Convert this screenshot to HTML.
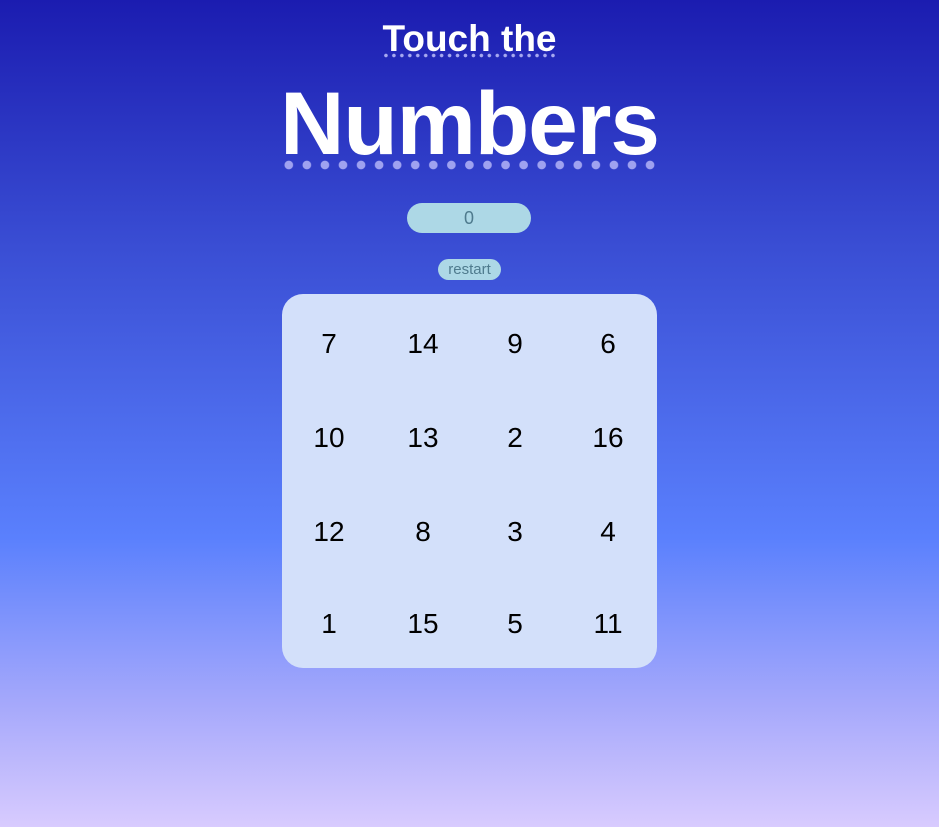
<!DOCTYPE html>
<html><head><style>
html,body{margin:0;padding:0}
body{width:939px;height:827px;overflow:hidden;background:linear-gradient(to bottom,#1b1cb0 0%,#3a4ed4 30%,#5a80fd 65%,#a5a8fb 85%,#d8cbfe 100%);font-family:"Liberation Sans",sans-serif;position:relative}
.t1{position:absolute;left:0;width:939px;top:20px;text-align:center;color:#fff;font-weight:bold;font-size:37px;line-height:38px}
.t1 span{display:inline-block;padding-bottom:0;background:radial-gradient(circle,#a6a8f0 1.6px,transparent 2px) left bottom/7.9px 5px;background-repeat:space no-repeat}
.t2{position:absolute;left:0;width:939px;top:78px;text-align:center;color:#fff;font-weight:bold;font-size:89px;line-height:90px}
.t2 span{display:inline-block;padding-bottom:2px;letter-spacing:-1px;background:radial-gradient(circle,#9fa2f0 4px,transparent 4.6px) left bottom/17.6px 10px;background-repeat:space no-repeat}
.cnt{position:absolute;left:407px;top:203px;width:124px;height:30px;border-radius:15px;background:#add8e6;color:#4f7b8e;text-align:center;font-size:18px;line-height:30px}
.rs{position:absolute;left:438px;top:259px;width:63px;height:21px;border-radius:11px;background:#add8e6;color:#4f7b8e;text-align:center;font-size:15px;line-height:21px}
.g{position:absolute;left:282px;top:294px;width:375px;height:374px;border-radius:21px;background:#d3e0fa}
.c{position:absolute;width:80px;height:40px;margin-left:-40px;margin-top:-20px;text-align:center;font-size:28px;line-height:40px;color:#000}
</style></head><body>
<div class="t1"><span>Touch the</span></div>
<div class="t2"><span>Numbers</span></div>
<div class="cnt">0</div>
<div class="rs">restart</div>
<div class="g">
<div class="c" style="left:47px;top:50px">7</div><div class="c" style="left:141px;top:50px">14</div><div class="c" style="left:233px;top:50px">9</div><div class="c" style="left:326px;top:50px">6</div>
<div class="c" style="left:47px;top:144px">10</div><div class="c" style="left:141px;top:144px">13</div><div class="c" style="left:233px;top:144px">2</div><div class="c" style="left:326px;top:144px">16</div>
<div class="c" style="left:47px;top:238px">12</div><div class="c" style="left:141px;top:238px">8</div><div class="c" style="left:233px;top:238px">3</div><div class="c" style="left:326px;top:238px">4</div>
<div class="c" style="left:47px;top:330px">1</div><div class="c" style="left:141px;top:330px">15</div><div class="c" style="left:233px;top:330px">5</div><div class="c" style="left:326px;top:330px">11</div>
</div>
</body></html>
